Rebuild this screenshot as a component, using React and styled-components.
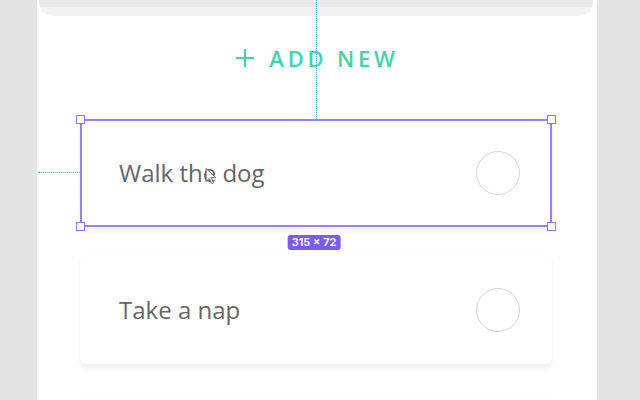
import React from "react";
import styled, { createGlobalStyle } from "styled-components";

const GlobalStyle = createGlobalStyle`
  html, body {
    margin: 0;
    padding: 0;
    background: #e4e4e4;
    font-family: "Open Sans", "Noto Sans", sans-serif;
  }
`;

const Panel = styled.main`
  width: 560px;
  height: 400px;
  margin-left: 37px;
  background: #ffffff;
  overflow: hidden;
  display: flex;
  flex-direction: column;

  & > * {
    flex-shrink: 0;
  }
`;

const PrevCard = styled.div`
  height: 16px;
  margin: 0 4px 0 2px;
  background: linear-gradient(#ebebeb 7px, #f2f2f2 7px);
  border-radius: 0 0 14px 14px;
`;

const AddNew = styled.button`
  align-self: center;
  margin: 27px 0 0 0;
  padding: 0;
  height: 30px;
  border: none;
  background: none;
  display: flex;
  align-items: center;
  gap: 14px;
  color: #3fd4ae;
  font-family: "Open Sans", sans-serif;
  font-size: 22px;
  font-weight: 600;
  letter-spacing: 3.8px;
  position: relative;
  left: 0px;
`;

const List = styled.ul`
  list-style: none;
  margin: 46px 0 0 0;
  padding: 0 0 0 43px;
  display: flex;
  flex-direction: column;
  gap: 29px;
`;

const Card = styled.li`
  position: relative;
  flex-shrink: 0;
  width: 472px;
  height: 108px;
  box-sizing: border-box;
  padding: 0 32px 0 39px;
  display: flex;
  align-items: center;
  justify-content: space-between;
  background: #fff;
  border-radius: 6px;
  box-shadow: 0 5px 4px rgba(0, 0, 0, 0.05), 0 0 2px rgba(0, 0, 0, 0.06);
`;

const Title = styled.span`
  font-size: 24px;
  color: #666666;
  position: relative;
  top: -1px;
`;

const Check = styled.span`
  width: 44px;
  height: 44px;
  box-sizing: border-box;
  border-radius: 50%;
  border: 1.5px solid #d4d4d4;
`;

const Frame = styled.div`
  position: absolute;
  inset: 0;
  border: 2px solid #9780f0;
  pointer-events: none;
`;

const Handle = styled.span`
  position: absolute;
  width: 7px;
  height: 7px;
  background: #fff;
  border: 1.5px solid #8f76ee;
  ${p => (p.$top ? "top: -6px;" : "bottom: -6px;")}
  ${p => (p.$left ? "left: -6px;" : "right: -6px;")}
`;

const SizeTag = styled.span`
  position: absolute;
  left: 50%;
  bottom: -23px;
  transform: translateX(-50%);
  margin-left: -2px;
  padding: 1px 4px;
  background: #7b5cf2;
  color: #fff;
  border-radius: 3px;
  font-family: "Inter", sans-serif;
  font-size: 11px;
  font-weight: 600;
  line-height: 13px;
  white-space: nowrap;
`;

const GuideV = styled.span`
  position: absolute;
  left: 236px;
  bottom: 100%;
  height: 130px;
  border-left: 1px dotted #5aa6d6;
`;

const GuideH = styled.span`
  position: absolute;
  right: 100%;
  top: 53px;
  width: 42px;
  border-top: 1px dotted #5aa6d6;
`;

const Cursor = styled.svg`
  position: absolute;
  left: 124px;
  top: 48px;
`;

const PlusIcon = () => (
  <svg width="20" height="20" viewBox="0 0 20 20">
    <path d="M10 1v18M1 10h18" stroke="#3fd4ae" strokeWidth="2.2" />
  </svg>
);

const Selection = () => (
  <>
    <GuideV />
    <GuideH />
    <Frame>
      <Handle $top $left />
      <Handle $top />
      <Handle $left />
      <Handle />
    </Frame>
    <SizeTag>315 × 72</SizeTag>
    <Cursor width="16" height="20" viewBox="0 0 16 20">
      <path
        d="M2 1.5v13l3.2-3 2.4 5.2 2-0.9-2.3-5.1h4.5z"
        fill="#fff"
        stroke="#555"
        strokeWidth="1"
        opacity="0.85"
      />
    </Cursor>
  </>
);

const todos = [
  { title: "Walk the dog", selected: true },
  { title: "Take a nap" },
  { title: "" }
];

export default function App() {
  return (
    <>
      <GlobalStyle />
      <Panel>
        <PrevCard />
        <AddNew>
          <PlusIcon />
          ADD NEW
        </AddNew>
        <List>
          {todos.map((todo, i) => (
            <Card key={i}>
              <Title>{todo.title}</Title>
              <Check />
              {todo.selected && <Selection />}
            </Card>
          ))}
        </List>
      </Panel>
    </>
  );
}
